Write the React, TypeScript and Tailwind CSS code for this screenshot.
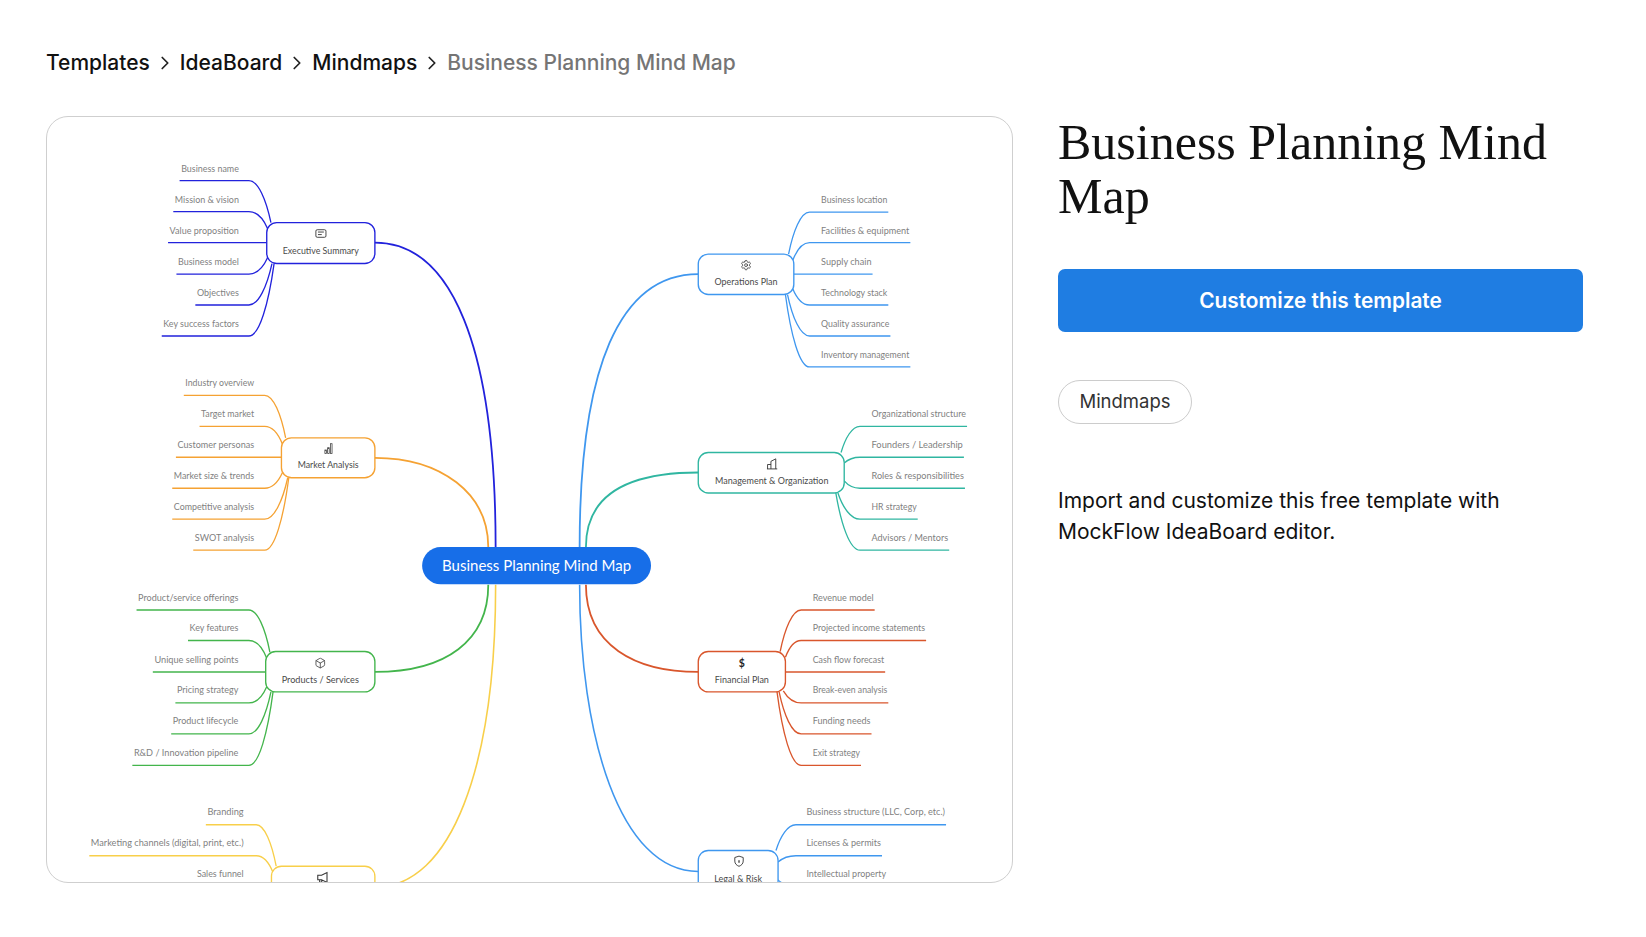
import React from "react";
import { Settings, Box, ChevronRight } from "lucide-react";

type Leaf = [string, number, number, number, number]; // text, line y, far x, attach x, attach y
type Branch = {
  side: "l" | "r";
  color: string;
  bend: number;
  textEdge: number;
  main: string;
  mainWidth: number;
  box: [number, number, number, number];
  label: string;
  labelX: number;
  labelY: number;
  labelW: number;
  leaves: Leaf[];
};

const branches: Branch[] = [
  {
    side: "l", color: "#2222dc", bend: 237, textEdge: 227.5, mainWidth: 1.7,
    main: "M357 231 C430 231 472 330 472 521", box: [254, 212, 103, 39],
    label: "Executive Summary", labelX: 305.5, labelY: 239, labelW: 72.5,
    leaves: [
      ["Business name", 172, 171, 258, 212],
      ["Mission & vision", 201.5, 165, 255, 218],
      ["Value proposition", 231, 160, 254, 231],
      ["Business model", 261, 168, 255, 245],
      ["Objectives", 290.5, 186, 259, 251],
      ["Key success factors", 320, 154, 261, 251],
    ],
  },
  {
    side: "l", color: "#f5a233", bend: 252, textEdge: 242, mainWidth: 1.7,
    main: "M357 436 C420 436 465 470 465 521", box: [268, 417, 89, 38],
    label: "Market Analysis", labelX: 312.5, labelY: 443, labelW: 58,
    leaves: [
      ["Industry overview", 376.5, 175, 272, 417],
      ["Target market", 406, 190, 269, 423],
      ["Customer personas", 435.5, 167.5, 268, 435.5],
      ["Market size & trends", 465, 164, 269, 450],
      ["Competitive analysis", 494.5, 164, 274, 455],
      ["SWOT analysis", 524, 184, 275, 455],
    ],
  },
  {
    side: "l", color: "#43b54c", bend: 237, textEdge: 227, mainWidth: 1.7,
    main: "M357 640 C425 640 465 610 465 557", box: [253, 620.5, 104, 38.5],
    label: "Products / Services", labelX: 305, labelY: 647.5, labelW: 73.5,
    leaves: [
      ["Product/service offerings", 581, 130, 257, 621],
      ["Key features", 610, 179, 254, 627],
      ["Unique selling points", 640, 145.5, 253, 640],
      ["Pricing strategy", 669.5, 167, 254, 654],
      ["Product lifecycle", 699, 163, 258, 659],
      ["R&D / Innovation pipeline", 729, 126, 260, 659],
    ],
  },
  {
    side: "l", color: "#f8cf4a", bend: 244, textEdge: 232, mainWidth: 1.5,
    main: "M357 845 C430 845 472 730 472 557", box: [258.5, 825, 98.5, 39],
    label: "", labelX: 308, labelY: 852, labelW: 0,
    leaves: [
      ["Branding", 785.5, 196, 263, 825],
      ["Marketing channels (digital, print, etc.)", 815, 85, 260, 831],
      ["Sales funnel", 844.5, 186, 258.5, 844.5],
    ],
  },
  {
    side: "r", color: "#3f97ef", bend: 771, textEdge: 782, mainWidth: 1.7,
    main: "M665 261 C590 261 552 350 552 521", box: [665, 242, 91, 38.5],
    label: "Operations Plan", labelX: 710.5, labelY: 268, labelW: 60,
    leaves: [
      ["Business location", 202, 846, 751, 242],
      ["Facilities & equipment", 231, 867, 755, 248],
      ["Supply chain", 261, 831, 756, 261],
      ["Technology stack", 290.5, 846, 755, 275],
      ["Quality assurance", 320, 848, 750, 280.5],
      ["Inventory management", 349.5, 867, 748, 280.5],
    ],
  },
  {
    side: "r", color: "#30b6a1", bend: 819, textEdge: 830, mainWidth: 1.7,
    main: "M665 450 C600 450 558 470 558 521", box: [665, 431, 139, 38.5],
    label: "Management & Organization", labelX: 735, labelY: 458, labelW: 108,
    leaves: [
      ["Organizational structure", 406, 921, 801, 431],
      ["Founders / Leadership", 435.5, 918, 804, 441],
      ["Roles & responsibilities", 465, 919, 804, 458],
      ["HR strategy", 494.5, 874, 798, 469.5],
      ["Advisors / Mentors", 524, 904, 796, 469.5],
    ],
  },
  {
    side: "r", color: "#d9562c", bend: 763, textEdge: 774, mainWidth: 1.7,
    main: "M665 640 C605 640 558 615 558 557", box: [665, 620.5, 83, 38.5],
    label: "Financial Plan", labelX: 706.5, labelY: 647.5, labelW: 51.5,
    leaves: [
      ["Revenue model", 581, 833, 743, 620.5],
      ["Projected income statements", 610, 882, 748, 626],
      ["Cash flow forecast", 640, 843, 748, 640],
      ["Break-even analysis", 669.5, 846, 746, 658],
      ["Funding needs", 699, 830, 742, 659],
      ["Exit strategy", 729, 820, 740, 659],
    ],
  },
  {
    side: "r", color: "#3f97ef", bend: 758, textEdge: 768, mainWidth: 1.5,
    main: "M665 830 C590 830 552 700 552 557", box: [665, 810, 76, 39],
    label: "Legal & Risk", labelX: 703, labelY: 836.5, labelW: 45.6,
    leaves: [
      ["Business structure (LLC, Corp, etc.)", 785.5, 901, 739, 810],
      ["Licenses & permits", 815, 840, 741, 821],
      ["Intellectual property", 844.5, 845, 741, 838],
    ],
  },
];

function leafPath(far: number, y: number, b: number, xn: number, yn: number) {
  if (Math.abs(y - yn) < 0.6) return `M${far} ${y} H${xn}`;
  const c1 = b + (xn - b) * 0.42;
  const c2x = xn - (xn - b) * 0.22;
  const c2y = y + (yn - y) * 0.45;
  return `M${far} ${y} H${b} C${c1} ${y} ${c2x} ${c2y} ${xn} ${yn}`;
}

function MindMap() {
  return (
    <svg viewBox="44.76 111.43 919 728.6" className="block w-full h-full [font-family:Lato,sans-serif]">
      {branches.map((b) => (
        <g key={b.color + b.box[0] + b.box[1]}>
          <path d={b.main} fill="none" stroke={b.color} strokeWidth={b.mainWidth} />
          {b.leaves.map(([text, y, far, xn, yn]) => {
            const left = b.side === "l";
            const start = left ? far + 1.5 : b.textEdge;
            const end = left ? b.textEdge : far - 1;
            return (
              <g key={text}>
                <path d={leafPath(far, y, b.bend, xn, yn)} fill="none" stroke={b.color} strokeWidth={1.25} />
                <text x={start} y={y - (y > 550 ? 9 : 8.4)} fontSize={8.8} fill="#7f7f7f" textLength={end - start} lengthAdjust="spacingAndGlyphs">
                  {text}
                </text>
              </g>
            );
          })}
          <rect x={b.box[0]} y={b.box[1]} width={b.box[2]} height={b.box[3]} rx={9.5} fill="#fff" stroke={b.color} strokeWidth={1.3} />
          {b.label && (
            <text x={b.labelX - b.labelW / 2} y={b.labelY + 3.2} fontSize={8.8} fill="#4a4a4a" textLength={b.labelW} lengthAdjust="spacingAndGlyphs">
              {b.label}
            </text>
          )}
        </g>
      ))}

      {/* node icons */}
      <g fill="none" stroke="#333" strokeWidth={0.85}>
        <rect x={300.8} y={218.8} width={9.6} height={7.2} rx={1.3} />
        <path d="M302.8 221h5.6M302.8 223.4h3.6" />
        <rect x={309.4} y={428.6} width={1.5} height={3.2} strokeWidth={0.7} />
        <rect x={312} y={426.4} width={1.5} height={5.4} strokeWidth={0.7} />
        <rect x={314.6} y={422.6} width={1.6} height={9.2} strokeWidth={0.7} />
        <path d="M730.4 446.6h9.8M731 446.6v-4.2h3.2M734.2 446.6v-7.2l4.6-2.4v9.6" />
        <path d="M703.8 815.4l4 1.3v3.4c0 2.6-1.8 4.1-4 5-2.2-.9-4-2.4-4-5v-3.4z" />
        <path d="M703.8 819.4v2.4" strokeWidth={1.2} />
        <path d="M302.6 833.6h3.6l5.2-2.6v9.4l-5.2-2.6h-3.6zM304.4 837.8v2.4h2v-2.2" strokeWidth={1} />
      </g>
      <Settings x={705} y={247} width={11} height={11} stroke="#333" strokeWidth={1.6} />
      <Box x={299.5} y={626} width={11} height={11} stroke="#333" strokeWidth={1.6} />
      <text x={706.5} y={635.5} fontSize={10} fontWeight={700} fill="#222" textAnchor="middle">$</text>

      <rect x={402} y={521} width={218} height={35.5} rx={17.7} fill="#176ee8" />
      <text x={421} y={544} fontSize={14} fill="#fff" textLength={180} lengthAdjust="spacingAndGlyphs">
        Business Planning Mind Map
      </text>
    </svg>
  );
}

const crumb = "text-[#111] font-medium";

export default function App() {
  return (
    <div className="min-h-[937px] bg-white pl-[46px] pt-[49px] [font-family:Inter,sans-serif]">
      <nav className="flex items-center h-[28px] text-[21px] leading-[28px]">
        <span className={crumb}>Templates</span>
        <ChevronRight className="w-[22px] h-[22px] mx-[4px] text-[#222]" strokeWidth={1.9} />
        <span className={crumb}>IdeaBoard</span>
        <ChevronRight className="w-[22px] h-[22px] mx-[4px] text-[#222]" strokeWidth={1.9} />
        <span className={crumb}>Mindmaps</span>
        <ChevronRight className="w-[22px] h-[22px] mx-[4px] text-[#222]" strokeWidth={1.9} />
        <span className="text-[#757575] font-medium">Business Planning Mind Map</span>
      </nav>

      <div className="flex gap-[45px] mt-[39px]">
        <div className="w-[967px] h-[767px] shrink-0 overflow-hidden rounded-[22px] border border-[#cfcfcf]">
          <MindMap />
        </div>

        <div className="w-[525px] shrink-0">
          <h1 className="mt-[-1px] text-[50px] leading-[54px] font-normal text-[#111] [font-family:'Liberation_Serif',serif]">
            Business Planning Mind Map
          </h1>
          <button className="mt-[46px] block w-full h-[63px] rounded-[7px] bg-[#1f7de2] text-white text-[20.8px] font-semibold">
            Customize this template
          </button>
          <div className="mt-[48px] flex h-[44px] w-[134px] items-center justify-center rounded-full border border-[#cccccc] text-[18.5px] text-[#333]">
            Mindmaps
          </div>
          <p className="mt-[60.5px] text-[21px] leading-[31.5px] text-[#111]">
            Import and customize this free template with MockFlow IdeaBoard editor.
          </p>
        </div>
      </div>
    </div>
  );
}
